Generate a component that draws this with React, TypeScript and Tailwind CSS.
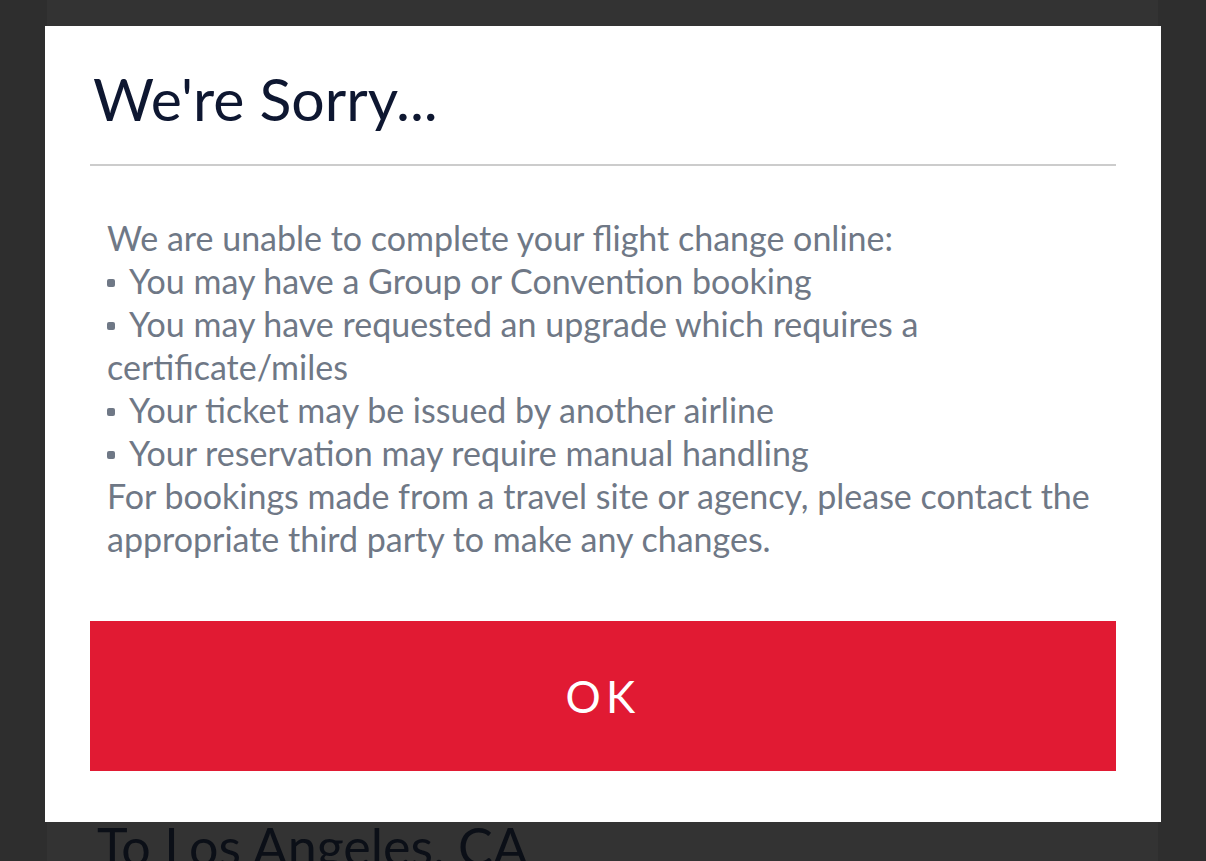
import React from 'react';

const reasons = [
  'You may have a Group or Convention booking',
  'You may have requested an upgrade which requires a certificate/miles',
  'Your ticket may be issued by another airline',
  'Your reservation may require manual handling',
];

const App: React.FC = () => {
  return (
    <div className="relative h-[861px] w-full overflow-hidden bg-[#2e2e2e] font-['Lato',sans-serif]">
      {/* Page behind the dimmed overlay */}
      <div className="ml-[47px] mr-[48px] h-full bg-[#333333] pt-[820px] pl-[50px]">
        <h2 className="text-[52px] leading-none text-[#0b0f17] whitespace-nowrap">To Los Angeles, CA</h2>
      </div>

      {/* Modal */}
      <div className="absolute inset-0 pt-[26px] pl-[45px]">
        <div className="w-[1116px] h-[796px] bg-white px-[45px] flex flex-col">
          <div className="h-[138px] pt-[38px] pl-[3px]">
            <h1 className="text-[59px] leading-[70px] text-[#0e1731]">We're Sorry...</h1>
          </div>
          <div className="h-[2px] bg-[#cccccc]" />

          <div className="mt-[50px] pl-[17px] text-[34px] leading-[43px] text-[#6f7886]">
            <p>We are unable to complete your flight change online:</p>
            {reasons.map((r) => (
              <p key={r}>
                <span className="inline-block w-[8px] h-[8px] rounded-[2px] bg-[#6f7886] align-middle mr-[14px] -mt-[4px]" />
                {r}
              </p>
            ))}
            <p>For bookings made from a travel site or agency, please contact the appropriate third party to make any changes.</p>
          </div>

          <button className="mt-auto mb-[51px] h-[150px] w-full bg-[#e11a33] text-white text-[44px] tracking-[0.12em] flex items-center justify-center">
            OK
          </button>
        </div>
      </div>
    </div>
  );
};

export default App;
